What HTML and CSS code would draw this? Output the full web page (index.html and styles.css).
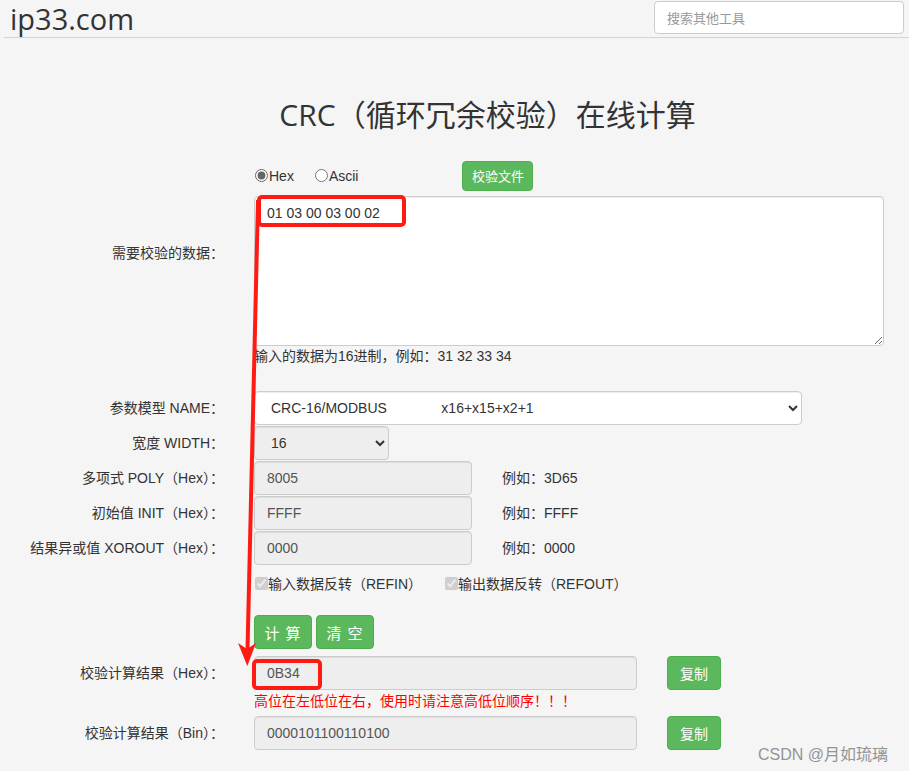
FILE: index.html
```html
<!DOCTYPE html>
<html lang="zh-CN">

<head>
    <meta charset="UTF-8">
    <meta name="viewport" content="width=device-width, initial-scale=1.0">

    <link rel="stylesheet" href="styles.css">

    <title>CRC（循环冗余校验）在线计算 - ip33.com</title>
</head>

<body>
    <div class="header">
        <a class="logo" href="#">ip33.com</a>
        <input class="search" type="text" placeholder="搜索其他工具">
    </div>

    <div class="main">
        <h1 class="title">CRC（循环冗余校验）在线计算</h1>

        <div class="form">
            <div class="group">
                <label class="label label_data">需要校验的数据：</label>
                <div class="field">
                    <div class="radios">
                        <label class="radio"><input type="radio" name="type" checked>Hex</label>
                        <label class="radio"><input type="radio" name="type">Ascii</label>
                        <button class="btn btn_file">校验文件</button>
                    </div>
                    <textarea class="control data">01 03 00 03 00 02</textarea>
                    <div class="help">输入的数据为16进制，例如：31 32 33 34</div>
                </div>
            </div>

            <div class="row first">
                <label class="label">参数模型 NAME：</label>
                <select class="control model">
                    <option>CRC-16/MODBUS&nbsp;&nbsp;&nbsp;&nbsp;&nbsp;&nbsp;&nbsp;&nbsp;&nbsp;&nbsp;&nbsp;&nbsp;&nbsp;&nbsp;x16+x15+x2+1</option>
                </select>
            </div>
            <div class="row">
                <label class="label">宽度 WIDTH：</label>
                <select class="control width" disabled>
                    <option>16</option>
                </select>
            </div>
            <div class="row">
                <label class="label">多项式 POLY（Hex）：</label>
                <input class="control short" type="text" value="8005" disabled>
                <span class="example">例如：3D65</span>
            </div>
            <div class="row">
                <label class="label">初始值 INIT（Hex）：</label>
                <input class="control short" type="text" value="FFFF" disabled>
                <span class="example">例如：FFFF</span>
            </div>
            <div class="row">
                <label class="label">结果异或值 XOROUT（Hex）：</label>
                <input class="control short" type="text" value="0000" disabled>
                <span class="example">例如：0000</span>
            </div>
            <div class="row checks">
                <span class="label"></span>
                <label class="check"><input type="checkbox" checked disabled>输入数据反转（REFIN）</label>
                <label class="check"><input type="checkbox" checked disabled>输出数据反转（REFOUT）</label>
            </div>
            <div class="row actions">
                <span class="label"></span>
                <button class="btn btn_big">计 算</button>
                <button class="btn btn_big">清 空</button>
            </div>
            <div class="row result">
                <label class="label">校验计算结果（Hex）：</label>
                <input class="control long" type="text" value="0B34" readonly>
                <button class="btn btn_copy">复制</button>
            </div>
            <div class="row warn">
                <span class="label"></span>
                <span class="warning">高位在左低位在右，使用时请注意高低位顺序！！！</span>
            </div>
            <div class="row">
                <label class="label">校验计算结果（Bin）：</label>
                <input class="control long" type="text" value="0000101100110100" readonly>
                <button class="btn btn_copy">复制</button>
            </div>
        </div>
    </div>

    <div class="watermark">CSDN @月如琉璃</div>

    <!-- annotation drawn over the screenshot -->
    <svg class="marks" width="909" height="771" viewBox="0 0 909 771">
        <rect x="259" y="197" width="145" height="28" rx="3" fill="none" stroke="#ff1a14" stroke-width="4"/>
        <rect x="254" y="661" width="66" height="27" rx="3" fill="none" stroke="#ff1a14" stroke-width="4"/>
        <line x1="258" y1="200" x2="247.5" y2="650" stroke="#ff1a14" stroke-width="4"/>
        <polygon points="238,643 247,649 256,643 247.3,666" fill="#ff1a14"/>
    </svg>
</body>

</html>
```

FILE: styles.css
```css
* {
    box-sizing: border-box;
}

html,
body {
    margin: 0;
    background-color: #f5f5f5;
    color: #333;
    font-family: "Liberation Sans", "Noto Sans CJK SC", sans-serif;
    font-size: 14px;
}

/* top bar */
.header {
    height: 38px;
    margin-left: 4px;
    border-bottom: 1px solid #d4d4d4;
    display: flex;
    justify-content: space-between;
    align-items: flex-start;
}

.logo {
    display: block;
    margin: 0 0 0 6px;
    font-family: "Open Sans", "Noto Sans", sans-serif;
    font-size: 29px;
    line-height: 37px;
    color: #333;
    text-decoration: none;
}

.search {
    width: 250px;
    height: 33px;
    margin: 1px 5px 0 0;
    padding: 0 12px;
    border: 1px solid #ccc;
    border-radius: 4px;
    background: #fff;
    font-family: "Noto Sans CJK SC", sans-serif;
    font-size: 13px;
}

.search::placeholder {
    color: #999;
}

/* page */
.main {
    padding-top: 57px;
}

.title {
    margin: 0;
    height: 40px;
    line-height: 40px;
    text-align: center;
    font-family: "Open Sans", "Noto Sans CJK SC", sans-serif;
    font-size: 30px;
    font-weight: normal;
    color: #333;
    padding-left: 66px;
}

.form {
    margin-top: 25px;
}

.group,
.row {
    display: grid;
    grid-template-columns: 224px auto auto 1fr;
    column-gap: 30px;
    justify-items: start;
}

.group {
    grid-template-columns: 224px 630px;
}

.row {
    height: 35px;
    align-items: start;
}

.label {
    justify-self: end;
    line-height: 34px;
    white-space: nowrap;
}

.label_data {
    padding-top: 76px;
}

.field {
    display: flex;
    flex-direction: column;
}

.radios {
    display: flex;
    align-items: center;
    height: 31px;
    margin-bottom: 5px;
}

.radio {
    display: flex;
    align-items: center;
    margin-right: 20px;
}

.radio input {
    margin: 0 1px 0 1px;
    width: 13px;
    height: 13px;
    accent-color: #666;
}

.btn {
    border: 1px solid #4cae4c;
    border-radius: 4px;
    background-color: #5cb85c;
    color: #fff;
    font-family: "Liberation Sans", "Noto Sans CJK SC", sans-serif;
    font-size: 14px;
    padding: 0;
    cursor: pointer;
}

.btn_file {
    margin-left: 84px;
    width: 71px;
    height: 30px;
    font-size: 13px;
}

.control {
    height: 34px;
    padding: 6px 12px;
    border: 1px solid #ccc;
    border-radius: 4px;
    background-color: #fff;
    color: #555;
    font-family: "Liberation Sans", "Noto Sans CJK SC", sans-serif;
    font-size: 14px;
    box-shadow: inset 0 1px 1px rgba(0, 0, 0, 0.075);
}

.control:disabled,
.control[readonly] {
    background-color: #eee;
    opacity: 1;
}

.data {
    width: 630px;
    height: 150px;
    resize: vertical;
    color: #333;
    line-height: 20px;
    padding-top: 6px;
}

.help {
    line-height: 20px;
    margin-bottom: 25px;
}

.model {
    width: 548px;
    color: #333;
    padding-left: 12px;
}

.width {
    width: 135px;
    color: #333;
    padding-left: 12px;
}

.short {
    width: 218px;
}

.long {
    width: 383px;
}

.example {
    line-height: 34px;
}

.checks {
    height: 49px;
    grid-template-columns: 232px auto auto 1fr;
    column-gap: 22px;
}

.check {
    display: flex;
    align-items: center;
    height: 34px;
    color: #333;
}

.check input {
    margin: 0 0 0 1px;
    width: 13px;
    height: 13px;
}

.actions {
    grid-template-columns: 250px auto auto 1fr;
    column-gap: 4px;
    height: 41px;
}

.btn_big {
    width: 58px;
    height: 34px;
    font-size: 15px;
    letter-spacing: 1px;
}

.btn_copy {
    width: 54px;
    height: 34px;
    font-size: 14px;
}

.warn {
    height: 25px;
}

.warning {
    color: #f00;
    line-height: 20px;
}

.watermark {
    position: absolute;
    left: 758px;
    top: 741px;
    font-family: "Liberation Sans", "Noto Sans CJK SC", sans-serif;
    font-size: 16px;
    color: #8a8a8a;
    opacity: 0.9;
}

.marks {
    position: absolute;
    left: 0;
    top: 0;
    pointer-events: none;
}
```
